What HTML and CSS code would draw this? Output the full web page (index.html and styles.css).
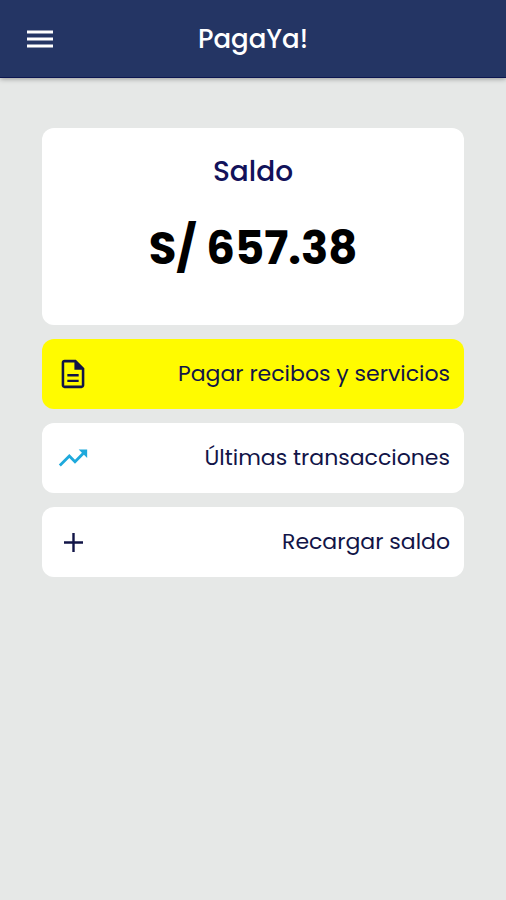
FILE: index.html
```html
<!DOCTYPE html>
<html lang="es">
<head>
  <meta charset="utf-8">
  <meta name="viewport" content="width=device-width, initial-scale=1">
  <title>PagaYa!</title>
  <link rel="stylesheet" href="styles.css">
</head>
<body>
  <header class="topbar">
    <button class="menu-button" type="button" aria-label="Menú">
      <svg class="icon" viewBox="0 0 36 36" aria-hidden="true"><path fill="currentColor" d="M5 9.500h26v3H5zM5 16.500h26v3H5zM5 23.500h26v3H5z"/></svg>
    </button>
    <h1 class="title">PagaYa!</h1>
  </header>
  <main class="content">
    <section class="balance">
      <h2 class="balance-label">Saldo</h2>
      <p class="balance-amount">S/ 657.38</p>
    </section>
    <button class="action action-primary" type="button">
      <svg class="icon" viewBox="0 0 24 24" aria-hidden="true"><path fill="currentColor" d="M8 16h8v1.700H8zm0-4h8v1.700H8zm6-10H6c-1.100 0-2 .9-2 2v16c0 1.100.89 2 1.990 2H18c1.100 0 2-.9 2-2V8l-6-6zm4.200 18.200H5.800V3.800H13V9h5.200v11.200z"/></svg>
      <span>Pagar recibos y servicios</span>
    </button>
    <button class="action" type="button">
      <svg class="icon icon-trend" viewBox="0 0 24 24" aria-hidden="true"><path fill="currentColor" d="M16 6l2.290 2.290-4.880 4.880-4-4L2 16.590 3.410 18l6-6 4 4 6.300-6.290L22 12V6z"/></svg>
      <span>Últimas transacciones</span>
    </button>
    <button class="action" type="button">
      <svg class="icon" viewBox="0 0 34 34" aria-hidden="true"><path fill="none" stroke="currentColor" stroke-width="2.400" d="M17.500 8v19M8 17.500h19"/></svg>
      <span>Recargar saldo</span>
    </button>
  </main>
</body>
</html>
```

FILE: styles.css
```css
* {
  box-sizing: border-box;
}

body {
  margin: 0;
  min-height: 100vh;
  background: #e6e8e7;
  color: #111447;
  font-family: Poppins, Inter, sans-serif;
}

button {
  border: 0;
  font: inherit;
  color: inherit;
  cursor: pointer;
}

.topbar {
  display: grid;
  grid-template-columns: 36px 1fr 36px;
  align-items: center;
  height: 78px;
  padding: 0 22px;
  background: #243564;
  border-bottom: 1px solid #0c1650;
  box-shadow: 0 1px 5px rgba(0, 0, 0, 0.35);
  color: #fff;
}

.menu-button {
  padding: 0;
  background: none;
}

.icon {
  display: block;
  flex: none;
  width: 34px;
  height: 34px;
}

.menu-button .icon {
  width: 36px;
  height: 36px;
}

.icon-trend {
  color: #1ea9dc;
}

.title {
  margin: 0;
  font-size: 26px;
  font-weight: 500;
  line-height: 36px;
  text-align: center;
}

.content {
  display: flex;
  flex-direction: column;
  gap: 14px;
  padding: 50px 42px;
}

.balance {
  padding: 24px 16px 39px;
  border-radius: 12px;
  background: #fff;
  text-align: center;
}

.balance-label {
  margin: 0 0 20px;
  color: #12125a;
  font-size: 28px;
  font-weight: 500;
  line-height: 40px;
}

.balance-amount {
  margin: 0;
  color: #000;
  font-size: 45px;
  font-weight: 700;
  line-height: 74px;
}

.action {
  display: flex;
  align-items: center;
  justify-content: space-between;
  min-height: 70px;
  padding: 8px 14px;
  border-radius: 12px;
  background: #fff;
  font-size: 22px;
  line-height: 34px;
  text-align: right;
}

.action-primary {
  background: #fffb00;
}
```
